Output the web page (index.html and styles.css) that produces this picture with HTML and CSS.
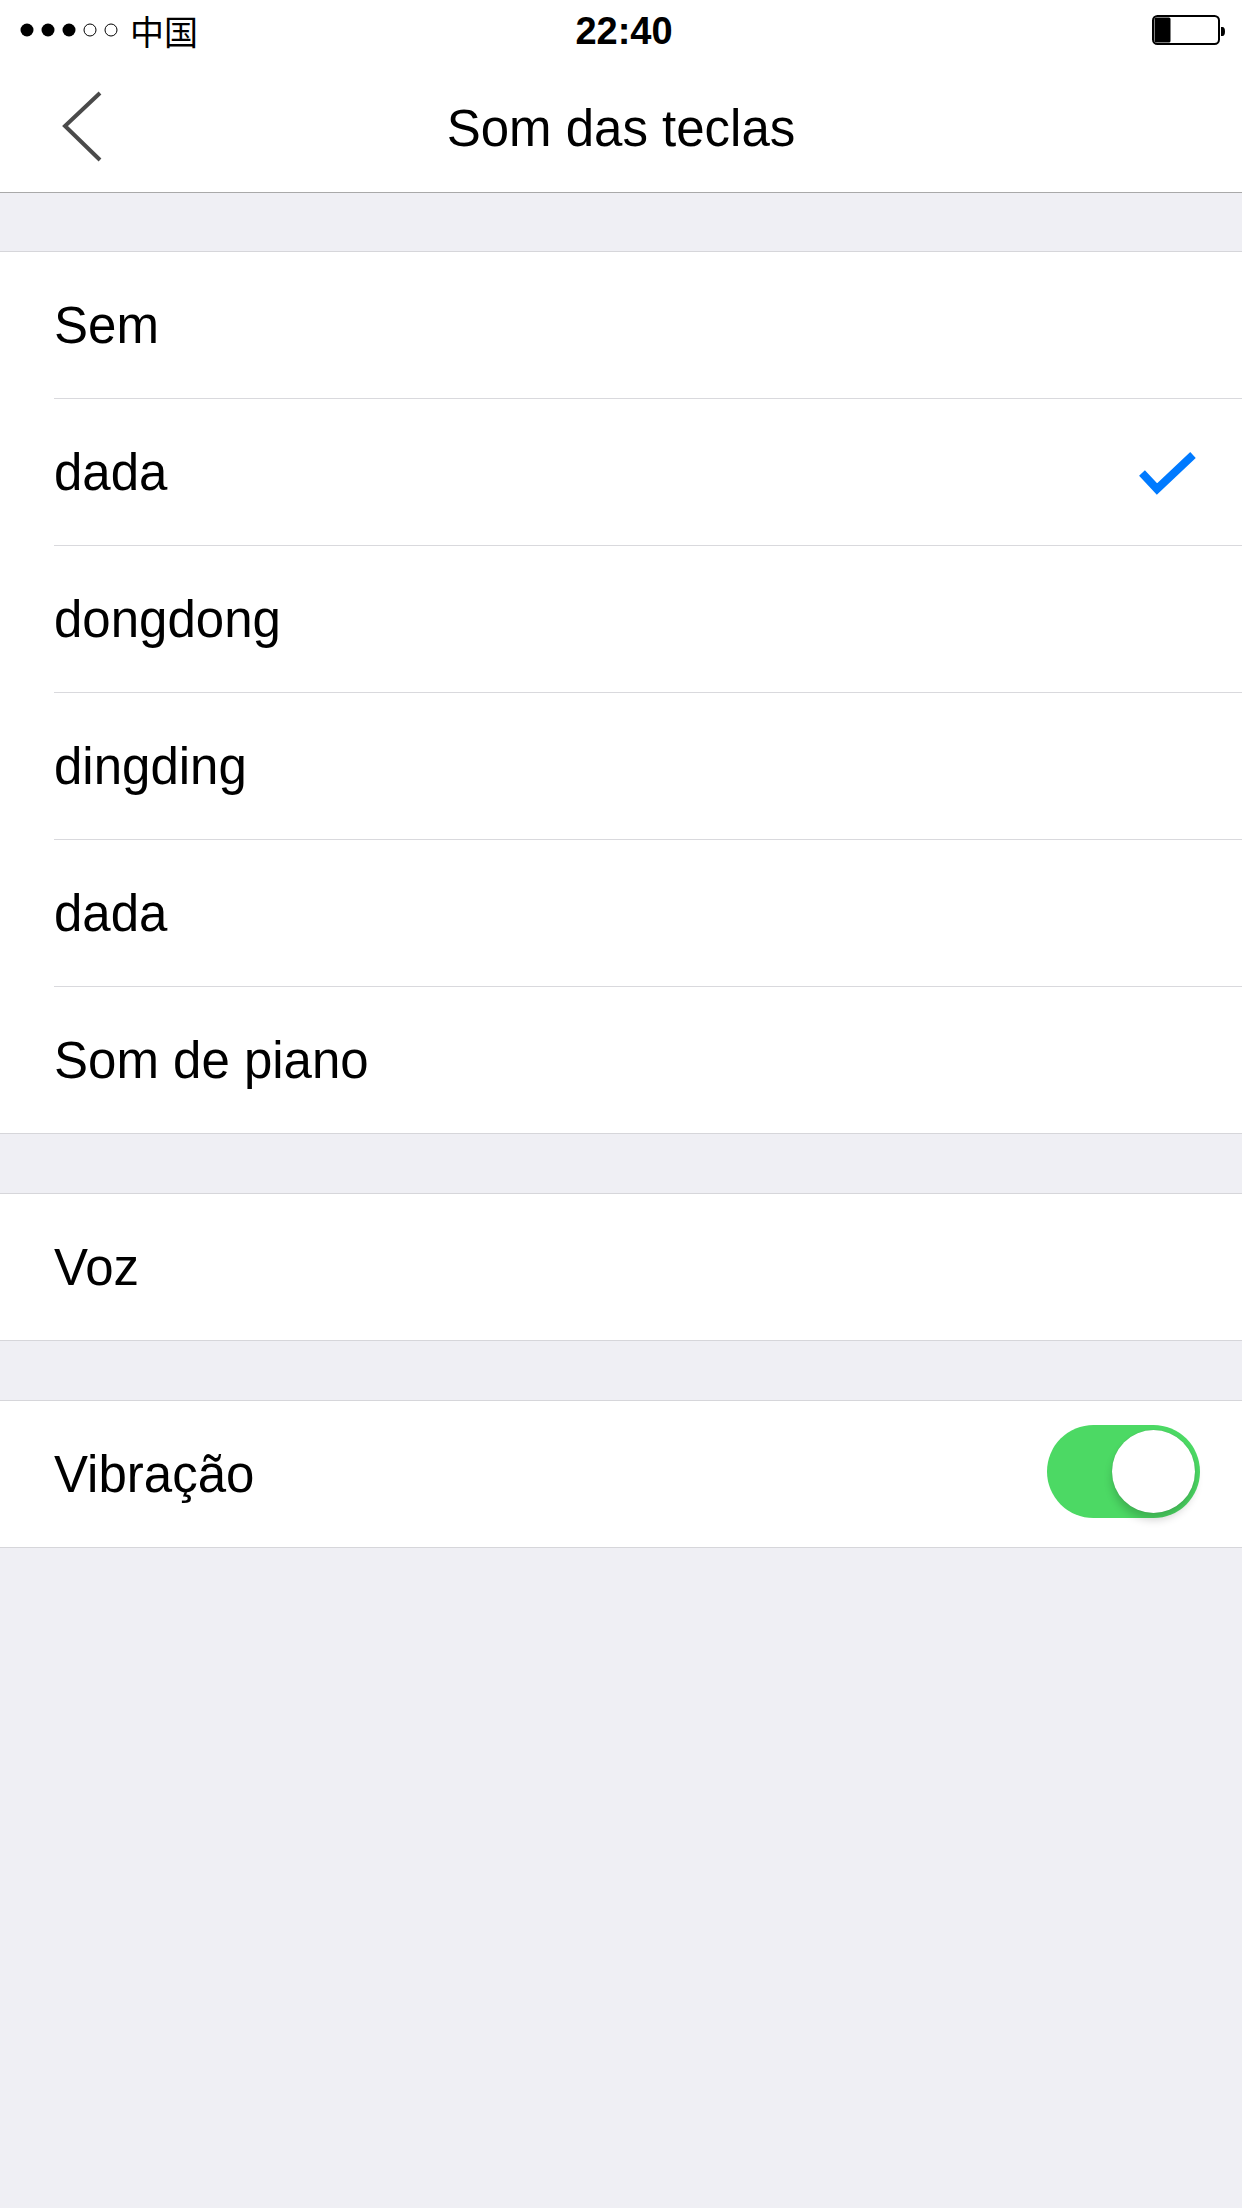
FILE: index.html
```html
<!DOCTYPE html>
<html lang="pt">
<head>
<meta charset="UTF-8">
<meta name="viewport" content="width=device-width, initial-scale=1.0">
<title>Som das teclas</title>
<link rel="stylesheet" href="styles.css">
</head>
<body>
<div class="header">
    <div class="status-bar">
        <div class="carrier">
            <svg class="signal" width="98" height="14" viewBox="0 0 98 14">
                <circle cx="7" cy="7" r="6.5" fill="#000"/>
                <circle cx="28" cy="7" r="6.5" fill="#000"/>
                <circle cx="49" cy="7" r="6.5" fill="#000"/>
                <circle cx="70" cy="7" r="6" fill="none" stroke="#000" stroke-width="1"/>
                <circle cx="91" cy="7" r="6" fill="none" stroke="#000" stroke-width="1"/>
            </svg>
            <span class="carrier-name">中国</span>
        </div>
        <div class="clock">22:40</div>
        <div class="battery-wrap">
            <svg class="battery" width="74" height="30" viewBox="0 0 74 30">
                <rect x="1" y="1" width="66" height="28" rx="4.5" fill="none" stroke="#000" stroke-width="2"/>
                <rect x="2.5" y="2.5" width="16" height="25" rx="1.5" fill="#000"/>
                <path d="M69 12 h1.5 a2.5 4.5 0 0 1 0 9 h-1.5 z" fill="#000"/>
            </svg>
        </div>
    </div>
    <div class="nav-bar">
        <a class="back" href="#">
            <svg width="46" height="72" viewBox="0 0 46 72">
                <polyline points="40,3 5,36 40,70" fill="none" stroke="#4a4a4a" stroke-width="4"/>
            </svg>
        </a>
        <h1 class="nav-title">Som das teclas</h1>
        <span></span>
    </div>
</div>

<div class="group first">
    <div class="cell"><span class="label">Sem</span></div>
    <div class="cell">
        <span class="label">dada</span>
        <svg class="check" width="60" height="48" viewBox="0 0 60 48">
            <polyline points="6,25 21,41 57,7" fill="none" stroke="#007aff" stroke-width="8"/>
        </svg>
    </div>
    <div class="cell"><span class="label">dongdong</span></div>
    <div class="cell"><span class="label">dingding</span></div>
    <div class="cell"><span class="label">dada</span></div>
    <div class="cell"><span class="label">Som de piano</span></div>
</div>

<div class="group">
    <div class="cell"><span class="label">Voz</span></div>
</div>

<div class="group">
    <div class="cell">
        <span class="label">Vibração</span>
        <span class="switch on"><span class="knob"></span></span>
    </div>
</div>
</body>
</html>
```

FILE: styles.css
```css
body {
    font-family: 'Liberation Sans', Arial, sans-serif;
    margin: 0;
    padding: 0;
    min-height: 100vh;
    background-color: #efeff4;
    color: #000;
}
.header {
    background-color: #fff;
    border-bottom: 1px solid #a9a9a9;
}
.status-bar {
    height: 60px;
    display: grid;
    grid-template-columns: 1fr auto 1fr;
    align-items: center;
}
.carrier {
    display: flex;
    align-items: center;
    padding-left: 20px;
}
.carrier-name {
    font-family: 'Noto Sans CJK SC', sans-serif;
    font-size: 34px;
    line-height: 1;
    margin-left: 12px;
    margin-top: 2px;
}
.clock {
    font-size: 38px;
    font-weight: bold;
    padding-left: 6px;
    margin-top: 2px;
}
.battery-wrap {
    display: flex;
    justify-content: flex-end;
    padding-right: 16px;
}
.battery {
    display: block;
}
.nav-bar {
    height: 132px;
    display: grid;
    grid-template-columns: 1fr auto 1fr;
    align-items: center;
}
.back {
    display: flex;
    padding-left: 60px;
}
.nav-title {
    margin: 0;
    padding-top: 4px;
    font-size: 51px;
    font-weight: normal;
}
.group {
    background-color: #fff;
    border-top: 1px solid #d6d6da;
    border-bottom: 1px solid #d6d6da;
    margin-top: 59px;
}
.group.first {
    margin-top: 58px;
}
.cell {
    height: 146px;
    margin-left: 54px;
    padding-right: 42px;
    display: flex;
    align-items: center;
    border-bottom: 1px solid #d9d9dd;
}
.cell:last-child {
    border-bottom: none;
}
.label {
    font-size: 51px;
}
.check {
    margin-left: auto;
    margin-right: 4px;
}
.switch {
    margin-left: auto;
    margin-bottom: 6px;
    width: 153px;
    height: 93px;
    box-sizing: border-box;
    padding: 5px;
    border-radius: 47px;
    display: flex;
    justify-content: flex-end;
    background-color: #4cd964;
}
.knob {
    width: 83px;
    height: 83px;
    border-radius: 50%;
    background-color: #fff;
    box-shadow: 0 7px 8px rgba(0,0,0,0.18), 0 0 1px rgba(0,0,0,0.2);
}
```
